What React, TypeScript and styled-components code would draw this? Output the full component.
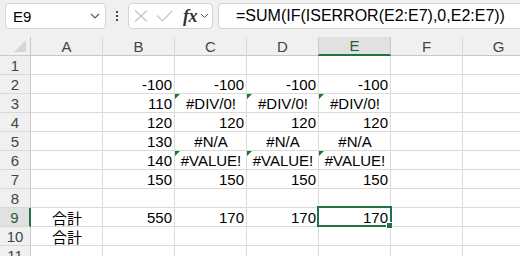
import { FC } from 'react';
import styled, { createGlobalStyle, css } from 'styled-components';

const GREEN = '#217346';

const GlobalStyle = createGlobalStyle`
	body {
		margin: 0;
		font-family: 'Liberation Sans', 'Noto Sans CJK JP', sans-serif;
	}
`;

const StyledRoot = styled.div`
	width: 520px;
	height: 256px;
	overflow: hidden;
	background-color: #ffffff;
`;

const StyledToolbar = styled.div`
	display: flex;
	align-items: flex-start;
	height: 37px;
	padding: 3px 0 0 5px;
	box-sizing: border-box;
	background-color: #f0f0f0;
`;

const StyledBox = styled.div`
	display: flex;
	align-items: center;
	height: 26px;
	box-sizing: border-box;
	background-color: #ffffff;
	border: 1px solid #d4d4d4;
	border-radius: 4px;
`;

const StyledNameBox = styled(StyledBox)`
	width: 101px;
	padding: 0 5px 0 7px;
	justify-content: space-between;
	font-size: 15px;
	color: #000;
`;

const StyledDots = styled.div`
	width: 22px;
	height: 26px;
	display: flex;
	flex-direction: column;
	align-items: center;
	justify-content: center;
	gap: 2px;

	span {
		width: 2px;
		height: 2px;
		background-color: #444;
	}
`;

const StyledFuncBox = styled(StyledBox)`
	width: 85px;
	padding: 0 3px 0 5px;
	gap: 8px;
`;

const StyledFx = styled.span`
	font-family: 'Liberation Serif', serif;
	font-style: italic;
	font-weight: bold;
	font-size: 18px;
	color: #333;
	margin: 0 -5px 0 2px;
	letter-spacing: -0.5px;
`;

const StyledFormula = styled(StyledBox)`
	flex: 1;
	margin: 0 -10px 0 5px;
	padding-left: 17px;
	font-size: 16px;
	color: #000;
`;

const StyledGrid = styled.div`
	display: grid;
	grid-template-columns: 31px repeat(7, 72px);
	grid-auto-rows: 19px;
	font-size: 15px;
`;

const baseCell = css`
	box-sizing: border-box;
	display: flex;
	align-items: center;
	white-space: nowrap;
	overflow: visible;
	position: relative;
`;

const StyledCorner = styled.div`
	${baseCell}
	background-color: #f0f0f0;
	border-right: 1px solid #c8c8c8;
	border-bottom: 1px solid #c8c8c8;

	&::after {
		content: '';
		position: absolute;
		right: 4px;
		bottom: 3px;
		border-left: 12px solid transparent;
		border-bottom: 12px solid #d6d6d6;
	}
`;

const StyledColHeader = styled.div<{ active?: boolean }>`
	${baseCell}
	justify-content: center;
	color: #444;
	background-color: #f0f0f0;
	border-right: 1px solid #d8d8d8;
	border-bottom: 1px solid #c8c8c8;
	${({ active }) =>
		active &&
		css`
			background-color: #e1e1e1;
			color: #1f5f3c;
			border-bottom: 2px solid ${GREEN};
			border-right-color: #c8c8c8;
			border-left: 1px solid #c8c8c8;
			margin-left: -1px;
		`}
`;

const StyledRowHeader = styled.div<{ active?: boolean }>`
	${baseCell}
	justify-content: center;
	color: #444;
	background-color: #f0f0f0;
	border-right: 1px solid #c8c8c8;
	border-bottom: 1px solid #d8d8d8;
	${({ active }) =>
		active &&
		css`
			background-color: #e1e1e1;
			color: #1f5f3c;
			border-right: 2px solid ${GREEN};
		`}
`;

const StyledCell = styled.div<{ align: 'left' | 'right' | 'center'; error?: boolean; selected?: boolean }>`
	${baseCell}
	padding: 0 2px 0 3px;
	color: #000;
	border-right: 1px solid #dadada;
	border-bottom: 1px solid #dadada;
	justify-content: ${({ align }) =>
		align === 'right' ? 'flex-end' : align === 'center' ? 'center' : 'flex-start'};

	${({ error }) =>
		error &&
		css`
			&::before {
				content: '';
				position: absolute;
				top: 0;
				left: 0;
				border-top: 5px solid #1a7a1a;
				border-right: 5px solid transparent;
			}
		`}

	${({ selected }) =>
		selected &&
		css`
			&::after {
				content: '';
				position: absolute;
				top: -2px;
				left: -2px;
				right: -2px;
				bottom: -1px;
				border: 2px solid ${GREEN};
				pointer-events: none;
			}
		`}
`;

const StyledHandle = styled.span`
	position: absolute;
	right: -3px;
	bottom: -3px;
	width: 5px;
	height: 5px;
	background-color: ${GREEN};
	border: 1px solid #ffffff;
	z-index: 2;
`;

const Chevron: FC<{ size?: number }> = ({ size = 10 }) => (
	<svg width={size} height={size * 0.6} viewBox="0 0 10 6" fill="none">
		<path d="M1 1l4 4 4-4" stroke="#555" strokeWidth="1.1" />
	</svg>
);

const COLUMNS = ['A', 'B', 'C', 'D', 'E', 'F', 'G'];

const ROWS: string[][] = [
	[],
	['', '-100', '-100', '-100', '-100'],
	['', '110', '#DIV/0!', '#DIV/0!', '#DIV/0!'],
	['', '120', '120', '120', '120'],
	['', '130', '#N/A', '#N/A', '#N/A'],
	['', '140', '#VALUE!', '#VALUE!', '#VALUE!'],
	['', '150', '150', '150', '150'],
	[],
	['合計', '550', '170', '170', '170'],
	['合計'],
	[],
];

const isError = (v: string) => v.startsWith('#');
const isNumber = (v: string) => /^-?\d+$/.test(v);

export default function App() {
	return (
		<StyledRoot>
			<GlobalStyle />
			<StyledToolbar>
				<StyledNameBox>
					<span>E9</span>
					<Chevron />
				</StyledNameBox>
				<StyledDots>
					<span />
					<span />
					<span />
				</StyledDots>
				<StyledFuncBox>
					<svg width="14" height="12" viewBox="0 0 14 12">
						<path d="M1 0.5l12 11M13 0.5l-12 11" stroke="#c4c4c4" strokeWidth="1.2" />
					</svg>
					<svg width="17" height="12" viewBox="0 0 17 12">
						<path d="M1 5.5l5.5 5.5L16 1" stroke="#c4c4c4" strokeWidth="1.2" fill="none" />
					</svg>
					<StyledFx>fx</StyledFx>
					<Chevron size={9} />
				</StyledFuncBox>
				<StyledFormula>=SUM(IF(ISERROR(E2:E7),0,E2:E7))</StyledFormula>
			</StyledToolbar>

			<StyledGrid>
				<StyledCorner />
				{COLUMNS.map((c) => (
					<StyledColHeader key={c} active={c === 'E'}>
						{c}
					</StyledColHeader>
				))}

				{ROWS.map((row, r) => {
					const rowNum = r + 1;
					return [
						<StyledRowHeader key={`h-${rowNum}`} active={rowNum === 9}>
							{rowNum}
						</StyledRowHeader>,
						...COLUMNS.map((c, ci) => {
							const value = row[ci] ?? '';
							const selected = rowNum === 9 && c === 'E';
							const error = isError(value) && value !== '#N/A';
							return (
								<StyledCell
									key={`${c}${rowNum}`}
									align={isNumber(value) ? 'right' : value ? 'center' : 'left'}
									error={error}
									selected={selected}
								>
									{value}
									{selected && <StyledHandle />}
								</StyledCell>
							);
						}),
					];
				})}
			</StyledGrid>
		</StyledRoot>
	);
}
